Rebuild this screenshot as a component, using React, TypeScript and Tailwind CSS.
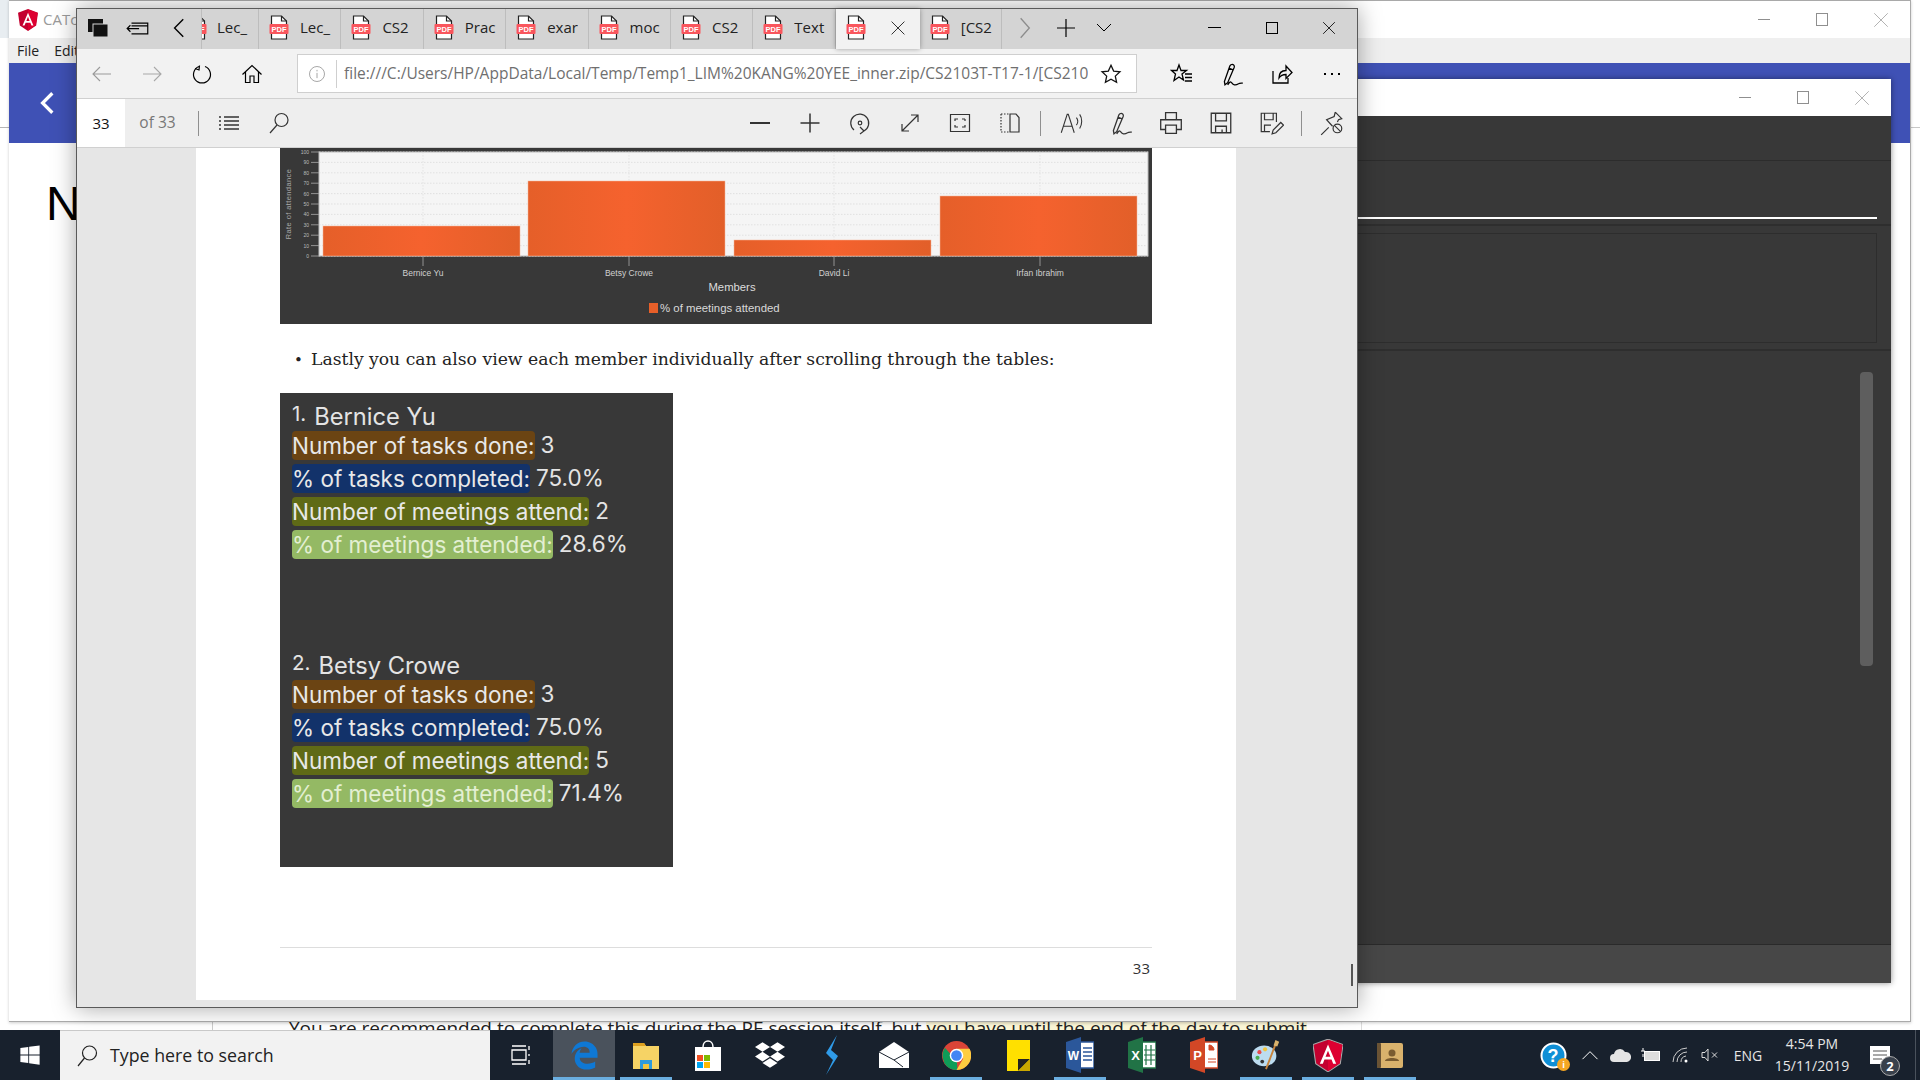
import React from 'react';
import { FaDropbox, FaEdgeLegacy, FaWindows } from 'react-icons/fa6';

const ui = "font-['Open_Sans',sans-serif]";

type IconProps = { children: React.ReactNode; size?: number; width?: number };

const Ico: React.FC<IconProps> = ({ children, size = 24, width = 1.2 }) => (
  <svg width={size} height={size} viewBox="0 0 24 24" fill="none" stroke="currentColor" strokeWidth={width}>
    {children}
  </svg>
);

const Cell: React.FC<{ w: string; children: React.ReactNode }> = ({ w, children }) => (
  <div className={`${w} h-full flex items-center justify-center shrink-0`}>{children}</div>
);

const PdfIcon = () => (
  <svg width="20" height="25" viewBox="0 0 20 25">
    <path d="M2.5 1h10l5 5v18h-15z" fill="#fff" stroke="#222" strokeWidth="1.2" />
    <path d="M12.5 1v5h5" fill="none" stroke="#222" strokeWidth="1.2" />
    <rect x="0.5" y="9" width="19" height="10" rx="1" fill="#f9565d" />
    <text x="10" y="17" textAnchor="middle" fontSize="7.5" fontWeight="700" fill="#fff" fontFamily="Liberation Sans, sans-serif">PDF</text>
  </svg>
);

const Tab: React.FC<{ label: string }> = ({ label }) => (
  <div className="w-[82.4px] h-full shrink-0 flex items-center pl-[10px] pb-[3px] border-r border-[#bdbdbd]">
    <PdfIcon />
    <span className="ml-[11px] w-[31px] overflow-hidden whitespace-nowrap text-[15px] text-[#222]">{label}</span>
  </div>
);

const TabStrip = () => (
  <div className="h-[40px] shrink-0 bg-[#d4d4d4] flex items-center">
    <Cell w="w-[41px] pb-[3px]">
      <svg width="22" height="22" viewBox="0 0 22 22">
        <rect x="1" y="2" width="15" height="13" fill="#111" />
        <rect x="6" y="7" width="15" height="13" fill="#111" stroke="#d4d4d4" strokeWidth="1" />
      </svg>
    </Cell>
    <Cell w="w-[40px] pb-[3px]">
      <Ico size={26} width={1.1}>
        <path d="M6 7.5h15v10H6M6 10h15M2 12.5h11M5 9.5l-3 3 3 3" />
      </Ico>
    </Cell>
    <Cell w="w-[43px] pb-[3px]">
      <Ico size={26} width={1.3}>
        <path d="M15 4l-8 8 8 8" />
      </Ico>
    </Cell>
    <div className="w-[58px] h-full shrink-0 flex items-center pb-[3px] overflow-hidden border-x border-[#bdbdbd]">
      <div className="-ml-[15px] flex">
        <PdfIcon />
      </div>
      <span className="ml-[10px] text-[15px] text-[#222]">Lec_</span>
    </div>
    <Tab label="Lec_" />
    <Tab label="CS2" />
    <Tab label="Prac" />
    <Tab label="exar" />
    <Tab label="moc" />
    <Tab label="CS2" />
    <Tab label="Text" />
    <div className="w-[84px] h-full shrink-0 bg-[#f2f2f2] flex items-center pl-[10px] pb-[3px] shadow-[0_0_5px_rgba(0,0,0,0.35)] z-10">
      <PdfIcon />
      <span className="ml-[21px] flex text-[#222]">
        <Ico size={22} width={1}>
          <path d="M5 5l14 14M19 5L5 19" />
        </Ico>
      </span>
    </div>
    <Tab label="[CS2" />
    <Cell w="w-[45px] pb-[3px]">
      <span className="text-[#8c8c8c] flex">
        <Ico size={26} width={1.2}>
          <path d="M8 3l8 9-8 9" />
        </Ico>
      </span>
    </Cell>
    <Cell w="w-[38px] pb-[3px]">
      <Ico size={24} width={1.2}>
        <path d="M12 3v18M3 12h18" />
      </Ico>
    </Cell>
    <Cell w="w-[37px] pb-[3px]">
      <Ico size={24} width={1}>
        <path d="M5 8l7 7 7-7" />
      </Ico>
    </Cell>
    <div className="flex-1" />
    <Cell w="w-[57px] pb-[3px]">
      <div className="w-[13px] h-px bg-black" />
    </Cell>
    <Cell w="w-[57px] pb-[3px]">
      <div className="w-[12px] h-[12px] border border-black" />
    </Cell>
    <Cell w="w-[57px] pb-[3px]">
      <Ico size={20} width={1}>
        <path d="M5 5l14 14M19 5L5 19" />
      </Ico>
    </Cell>
  </div>
);

const SignIcon = () => (
  <Ico size={26} width={1.2}>
    <path d="M5 19l.5 3 2.5-2 6-14c.8-2-1-3.5-3-2.5-.5.3-.8.7-1 1.2zM9 6.5l3.5 1.500M8 22c2-3.500 3-3 4-1.500s3 2.500 6 .5c1-.7 2-.7 4-.5" />
  </Ico>
);

const AddressBar = () => (
  <div className="h-[50px] shrink-0 bg-[#f2f2f2] flex items-center border-b border-[#d0d0d0]">
    <Cell w="w-[50px]">
      <span className="text-[#9a9a9a] flex">
        <Ico size={24} width={1.1}>
          <path d="M21 12H3M10 5l-7 7 7 7" />
        </Ico>
      </span>
    </Cell>
    <Cell w="w-[50px]">
      <span className="text-[#a8a8a8] flex">
        <Ico size={24} width={1.1}>
          <path d="M3 12h18M14 5l7 7-7 7" />
        </Ico>
      </span>
    </Cell>
    <Cell w="w-[50px]">
      <Ico size={24} width={1.2}>
        <path d="M9 4.5a8.5 8.5 0 1 0 6 0M9.5 3.5L9 8 5 6.500" />
      </Ico>
    </Cell>
    <Cell w="w-[50px]">
      <Ico size={24} width={1.2}>
        <path d="M2.5 12.5L12 3.5l9.5 9M5.5 10v10.5H10V14h4v6.5h4.5V10" />
      </Ico>
    </Cell>
    <div className="ml-[20px] w-[840px] h-[39px] shrink-0 bg-white border border-[#cfcfcf] flex items-center">
      <span className="w-[39px] flex justify-center text-[#8a8a8a] border-r border-[#cfcfcf] h-[28px] items-center">
        <Ico size={18} width={1}>
          <circle cx="12" cy="12" r="10" />
          <path d="M12 10.5v7M12 6.5v2" />
        </Ico>
      </span>
      <span className="ml-[7px] w-[744px] overflow-hidden whitespace-nowrap text-[15.5px] text-[#6f6f6f]">
        file:///C:/Users/HP/AppData/Local/Temp/Temp1_LIM%20KANG%20YEE_inner.zip/CS2103T-T17-1/[CS210
      </span>
      <span className="ml-[12px] flex text-[#111]">
        <Ico size={22} width={1.4}>
          <path d="M12 2.5l2.9 6.3 6.9.8-5.1 4.7 1.400 6.8-6.100-3.400-6.100 3.400 1.400-6.800-5.100-4.700 6.900-.8z" />
        </Ico>
      </span>
    </div>
    <div className="w-[20px] shrink-0" />
    <Cell w="w-[50px]">
      <Ico size={24} width={1.3}>
        <path d="M9 3l2 5.5h5.5L12 12l1.5 6L9 15l-5 3.5L5.5 12 1.5 8.5H7zM15 12h7M15 15.5h7M15 19h7" />
      </Ico>
    </Cell>
    <Cell w="w-[50px]">
      <SignIcon />
    </Cell>
    <Cell w="w-[50px]">
      <Ico size={24} width={1.3}>
        <path d="M3 9v12h15v-5M9 16c0-5 3-7.5 7-7.5V4l6 6.5-6 6v-4c-3 0-5.500 1-7 3.500z" />
      </Ico>
    </Cell>
    <Cell w="w-[50px]">
      <div className="flex gap-[5px]">
        <div className="w-[2px] h-[2px] bg-black" />
        <div className="w-[2px] h-[2px] bg-black" />
        <div className="w-[2px] h-[2px] bg-black" />
      </div>
    </Cell>
  </div>
);

const Sep = () => <div className="w-px h-[25px] bg-[#8f8f8f] shrink-0" />;

const PdfBar = () => (
  <div className="h-[49px] shrink-0 bg-[#eeeeee] flex items-center border-b border-[#d0d0d0] text-[#333]">
    <div className="w-[48px] h-full bg-white flex items-center justify-center text-[15px] text-[#111]">33</div>
    <div className="w-[65px] text-center text-[15.5px] text-[#777]">of 33</div>
    <div className="w-[8px]" />
    <Sep />
    <div className="w-[5px]" />
    <Cell w="w-[50px]">
      <Ico size={24} width={1.3}>
        <path d="M7 6h15M7 10h15M7 14h15M7 18h15M2 6h2M2 10h2M2 14h2M2 18h2" />
      </Ico>
    </Cell>
    <Cell w="w-[50px]">
      <Ico size={24} width={1.2}>
        <circle cx="14.5" cy="9" r="6.5" />
        <path d="M10 14L3 22" />
      </Ico>
    </Cell>
    <div className="flex-1" />
    <Cell w="w-[50px]">
      <div className="w-[20px] h-[2px] bg-[#333]" />
    </Cell>
    <Cell w="w-[50px]">
      <Ico size={24} width={1.5}>
        <path d="M12 2.5v19M2.5 12h19" />
      </Ico>
    </Cell>
    <Cell w="w-[50px]">
      <Ico size={24} width={1.2}>
        <path d="M6 19A9 9 0 1 1 16 20M12 16l4 4-4 3" />
        <circle cx="12" cy="12" r="1.8" />
      </Ico>
    </Cell>
    <Cell w="w-[50px]">
      <Ico size={24} width={1.2}>
        <path d="M4 20L20 4M13 4h7v7M4 13v7h7" />
      </Ico>
    </Cell>
    <Cell w="w-[50px]">
      <Ico size={24} width={1.2}>
        <path d="M2.5 3.5h19v17h-19zM7 10V8h3M17 8h-3M17 8v2M7 14v2h3M17 14v2h-3" />
      </Ico>
    </Cell>
    <Cell w="w-[50px]">
      <Ico size={24} width={1.2}>
        <path d="M3 3h8M3 21h8M3 3v18" strokeDasharray="1.5 1.5" />
        <path d="M12 3h6l3 3.5V21h-9z" />
      </Ico>
    </Cell>
    <div className="w-[5px]" />
    <Sep />
    <div className="w-[5px]" />
    <Cell w="w-[50px]">
      <Ico size={26} width={1}>
        <path d="M3 21L8.5 4h1L15 21M5 15h8M17 7c1.5 2 1.5 5 0 7M20 4c2.5 3.5 2.5 9 0 13" />
      </Ico>
    </Cell>
    <Cell w="w-[50px]">
      <SignIcon />
    </Cell>
    <Cell w="w-[50px]">
      <Ico size={26} width={1.2}>
        <path d="M7 9V2.5h10V9M7 18H2.5V9h19v9H17M7 14h10v7.5H7z" />
      </Ico>
    </Cell>
    <Cell w="w-[50px]">
      <Ico size={26} width={1.2}>
        <path d="M3 3h18v18H3zM7 3v7h10V3M7 21v-6h10v6M13 18v3" />
      </Ico>
    </Cell>
    <Cell w="w-[50px]">
      <Ico size={26} width={1.1}>
        <path d="M11 20H3V3h14v8M6 3v6h8V3M6 20v-6h6M13 22l1-3.5 7-7 2.5 2.5-7 7z" />
      </Ico>
    </Cell>
    <div className="w-[5px]" />
    <Sep />
    <div className="w-[5px]" />
    <Cell w="w-[50px]">
      <Ico size={26} width={1.1}>
        <path d="M2 23l7-7M15 2l6 6-3 1-1 2M15 2l-1 4-7 3 5.5 6" />
        <circle cx="17" cy="17" r="4" />
        <path d="M14 14l6 6" />
      </Ico>
    </Cell>
  </div>
);

const axisTicks = [0, 10, 20, 30, 40, 50, 60, 70, 80, 90, 100];
const bars = [
  { name: 'Bernice Yu', x: 43, top: 78, c: 143 },
  { name: 'Betsy Crowe', x: 248, top: 33, c: 349 },
  { name: 'David Li', x: 454, top: 92, c: 554 },
  { name: 'Irfan Ibrahim', x: 660, top: 48, c: 760 },
];

const AttendanceChart = () => (
  <svg width="872" height="176" viewBox="0 0 872 176" className="block shrink-0 bg-[#383838]">
    <defs>
      <linearGradient id="bar" x1="0" x2="1" y1="0" y2="0">
        <stop offset="0" stopColor="#e55f29" />
        <stop offset="0.5" stopColor="#f5622e" />
        <stop offset="1" stopColor="#e25f29" />
      </linearGradient>
    </defs>
    <rect x="39" y="4" width="829" height="104" fill="#f5f5f5" stroke="#bdbdbd" />
    {axisTicks.map((t) => {
      const y = 108 - t * 1.04;
      return (
        <g key={t}>
          <path d={`M39 ${y}H868`} stroke="#d9d9d9" strokeWidth="0.7" strokeDasharray="1.5 1.5" />
          <path d={`M31 ${y}H39`} stroke="#aaa" strokeWidth="0.8" />
          <text x="29" y={y + 2} textAnchor="end" fontSize="5" fill="#bbb" fontFamily="Liberation Sans, sans-serif">{t}</text>
        </g>
      );
    })}
    <text transform="translate(11 56) rotate(-90)" textAnchor="middle" fontSize="7.5" fill="#aaa" fontFamily="Liberation Sans, sans-serif" letterSpacing="0.4">Rate of attendance</text>
    {bars.map((b) => (
      <g key={b.name}>
        <path d={`M${b.c} 4V108`} stroke="#dedede" strokeWidth="0.7" strokeDasharray="1.5 1.5" />
        <rect x={b.x} y={b.top} width="197" height={108 - b.top} fill="url(#bar)" stroke="#f6b79c" strokeWidth="0.5" />
        <path d={`M${b.c} 108V118`} stroke="#aaa" strokeWidth="0.8" />
        <text x={b.c} y="128" textAnchor="middle" fontSize="8.5" fill="#d0d0d0" fontFamily="Liberation Sans, sans-serif">{b.name}</text>
      </g>
    ))}
    <text x="452" y="143" textAnchor="middle" fontSize="11.3" fill="#dcdcdc" fontFamily="Liberation Sans, sans-serif">Members</text>
    <rect x="369" y="155" width="9" height="10" fill="#e75f29" />
    <text x="380" y="164" fontSize="11.4" fill="#d8d8d8" fontFamily="Liberation Sans, sans-serif">% of meetings attended</text>
  </svg>
);

const Stat: React.FC<{ label: string; value: string; bg: string; tone?: string }> = ({ label, value, bg, tone = 'text-[#e8e8e8]' }) => (
  <div className="flex items-center h-[29px]">
    <span className={`${bg} ${tone} h-full rounded-[4px] flex items-center whitespace-nowrap`}>{label}</span>
    <span className="ml-[6px] -mt-[2px] text-[#e4e4e4] whitespace-nowrap">{value}</span>
  </div>
);

const Member: React.FC<{ n: number; name: string; done: string; pct: string; met: string; metPct: string }> = ({ n, name, done, pct, met, metPct }) => (
  <div className="flex flex-col">
    <div className="h-[31px] pt-[2px] flex items-center text-[#e4e4e4] text-[23.7px]">
      <span className="text-[20.5px] -mt-[5px] mr-[8px]">{n}.</span>
      {name}
    </div>
    <div className="flex flex-col gap-[4px]">
      <Stat label="Number of tasks done:" value={done} bg="bg-[#6b4413]" />
      <Stat label="% of tasks completed:" value={pct} bg="bg-[#12326a]" />
      <Stat label="Number of meetings attend:" value={met} bg="bg-[#5f6a16]" />
      <Stat label="% of meetings attended:" value={metPct} bg="bg-[#94b964]" tone="text-[#e3efd2]" />
    </div>
  </div>
);

const EdgeWindow = () => (
  <div className={`absolute left-[76px] top-[8px] w-[1282px] h-[1000px] flex flex-col border border-[#5a5a5a] shadow-[0_0_22px_rgba(0,0,0,0.35)] ${ui}`}>
    <TabStrip />
    <AddressBar />
    <PdfBar />
    <div className="relative flex-1 bg-[#e6e6e6] overflow-hidden pl-[119px]">
      <div className="w-[1040px] h-[852px] bg-white px-[84px] flex flex-col">
        <AttendanceChart />
        <div className="mt-[25px] h-[22px] flex items-center font-['DejaVu_Serif',serif] text-[17.2px] text-[#222] whitespace-nowrap">
          <span className="w-[31px] pl-[14px] shrink-0 text-[15px]">•</span>
          Lastly you can also view each member individually after scrolling through the tables:
        </div>
        <div className="mt-[22px] w-[393px] h-[474px] shrink-0 bg-[#383838] pt-[7px] pl-[12px] font-['Inter',sans-serif] text-[22.5px] flex flex-col gap-[90px]">
          <Member n={1} name="Bernice Yu" done="3" pct="75.0%" met="2" metPct="28.6%" />
          <Member n={2} name="Betsy Crowe" done="3" pct="75.0%" met="5" metPct="71.4%" />
        </div>
        <div className="mt-[80px] border-t border-[#dddddd] pt-[9px] pr-[2px] text-right text-[15px] text-[#333]">33</div>
      </div>
      <div className="absolute right-[4px] top-[816px] w-[2px] h-[22px] bg-[#555]" />
    </div>
  </div>
);

const WinButtons = () => (
  <div className="flex h-full items-center">
    <Cell w="w-[58.5px]">
      <div className="w-[12px] h-px bg-[#8f8f8f]" />
    </Cell>
    <Cell w="w-[58.5px]">
      <div className="w-[12px] h-[13px] border border-[#8f8f8f]" />
    </Cell>
    <Cell w="w-[58.5px]">
      <span className="flex text-[#9a9a9a]">
        <Ico size={18} width={1}>
          <path d="M3 3l18 18M21 3L3 21" />
        </Ico>
      </span>
    </Cell>
  </div>
);

const AngularLogo: React.FC<{ size: number; ring?: boolean }> = ({ size, ring }) => (
  <svg width={size} height={size * 1.1} viewBox="0 0 22 24">
    <path d="M11 0L0 4l2 14 9 6 9-6 2-14z" fill="#c3002f" stroke={ring ? '#a8a8a8' : 'none'} strokeWidth="0.8" />
    <path d="M11 0.5v23l8.6-5.8 1.9-13.4z" fill="#dd0031" />
    <path d="M11 4L5 18h2.200l1.200-3h5.200l1.200 3H17zM9.200 13L11 8.500 12.800 13z" fill="#fff" />
  </svg>
);

const BackWindow = () => (
  <div className={`absolute left-[9px] top-0 w-[1902px] h-[1022px] bg-white flex flex-col border-b border-[#aaaaaa] border-r shadow-[0_1px_3px_rgba(0,0,0,0.2)] ${ui}`}>
    <div className="h-[38px] shrink-0 bg-white border-t border-[#a9a9a9] flex items-center pl-[9px]">
      <AngularLogo size={20} />
      <span className="ml-[5px] text-[15px] text-[#9a9a9a]">CATcher</span>
      <div className="flex-1" />
      <WinButtons />
    </div>
    <div className="h-[25px] shrink-0 bg-[#efefef] flex items-center pl-[8px] gap-[15px] text-[14px] text-[#222]">
      <span>File</span>
      <span>Edit</span>
    </div>
    <div className="h-[80px] shrink-0 bg-[#3f51b5] flex items-center pl-[26px] text-white">
      <Ico size={26} width={3}>
        <path d="M16 3l-9 9 9 9" />
      </Ico>
    </div>
    <div className="pt-[25px] pl-[37px] text-[48px] leading-[72px] font-['Liberation_Sans',sans-serif] text-black">N</div>
  </div>
);

const ModalWindow = () => (
  <div className="absolute left-[1200px] top-[79px] w-[691px] h-[904px] flex flex-col shadow-[0_0_6px_rgba(0,0,0,0.45)]">
    <div className="h-[37px] shrink-0 bg-white flex justify-end">
      <WinButtons />
    </div>
    <div className="h-[45px] shrink-0 bg-[#383838] border-b border-[#2c2c2c]" />
    <div className="h-[65px] shrink-0 bg-[#383838] border-b-2 border-[#2e2e2e] flex flex-col pr-[14px] pt-[56px]">
      <div className="h-[2px] bg-white" />
    </div>
    <div className="h-[125px] shrink-0 bg-[#383838] border-b-2 border-[#2e2e2e] pt-[7px] pr-[14px]">
      <div className="h-[110px] border border-[#2d2d2d]" />
    </div>
    <div className="flex-1 bg-[#383838] border-b border-[#2a2a2a] flex justify-end pt-[21px] pr-[18px]">
      <div className="w-[13px] h-[294px] rounded-[4px] bg-[#5e5e5e]" />
    </div>
    <div className="h-[38px] shrink-0 bg-[#474747]" />
  </div>
);

const tasks: { icon: React.ReactNode; mark?: 'full' | 'line'; active?: boolean }[] = [
  { icon: <FaEdgeLegacy size={29} color="#0f78d4" />, mark: 'full', active: true },
  {
    icon: (
      <svg width="28" height="32" viewBox="0 0 28 32">
        <path d="M1 4h11l2 3h13v23H1z" fill="#f6d365" />
        <path d="M1 4h11l2 3H1z" fill="#dda01f" />
        <path d="M8 30v-9h12v9h-3v-5h-6v5z" fill="#2f9bdc" />
        <rect x="11" y="25" width="6" height="5" fill="#f3c53f" />
      </svg>
    ),
    mark: 'line',
  },
  {
    icon: (
      <svg width="28" height="32" viewBox="0 0 28 32">
        <path d="M9 8c0-8 10-8 10 0" fill="none" stroke="#fff" strokeWidth="1.5" />
        <rect x="1" y="8" width="26" height="24" fill="#fff" />
        <rect x="3" y="16" width="6" height="6" fill="#f25022" />
        <rect x="10" y="16" width="6" height="6" fill="#7fba00" />
        <rect x="3" y="23" width="6" height="6" fill="#00a4ef" />
        <rect x="10" y="23" width="6" height="6" fill="#ffb900" />
      </svg>
    ),
  },
  { icon: <FaDropbox size={30} color="#fff" /> },
  {
    icon: (
      <svg width="18" height="40" viewBox="0 0 18 40">
        <path d="M14 0L3 18l7 7-7 15 12-19-7-6z" fill="#2f9be8" />
      </svg>
    ),
  },
  {
    icon: (
      <svg width="30" height="26" viewBox="0 0 30 26">
        <path d="M0 10L15 0l15 10v16H0z" fill="#fff" />
        <path d="M0 10l15 8 15-8M15 18l9 7" fill="none" stroke="#18212d" strokeWidth="1" />
      </svg>
    ),
  },
  {
    icon: (
      <svg width="29" height="37" viewBox="0 0 30 30">
        <circle cx="15" cy="15" r="15" fill="#db4437" />
        <path d="M15 15L2 22a15 15 0 0 0 14 8z" fill="#0f9d58" />
        <path d="M3 7a15 15 0 0 0 0 16l9-6z" fill="#0f9d58" />
        <path d="M15 8h13.5A15 15 0 0 1 15 30l7-12z" fill="#ffcd40" />
        <circle cx="15" cy="15" r="7" fill="#fff" />
        <circle cx="15" cy="15" r="5.5" fill="#4285f4" />
      </svg>
    ),
    mark: 'line',
  },
  {
    icon: (
      <svg width="23" height="31" viewBox="0 0 23 31">
        <rect width="23" height="31" fill="#ffe000" />
        <path d="M11 31V19h12z" fill="#222" />
        <path d="M11 31l12-12v12z" fill="#caa800" />
      </svg>
    ),
  },
  {
    icon: (
      <svg width="28" height="36" viewBox="0 0 28 36">
        <rect x="9" y="5" width="19" height="26" fill="#fff" stroke="#2b579a" strokeWidth="1.5" />
        <path d="M17 11h9M17 15h9M17 19h9M17 23h9" stroke="#2b579a" strokeWidth="1.5" />
        <path d="M0 5l15-5v36L0 31z" fill="#2b579a" />
        <text x="7.5" y="23" textAnchor="middle" fontSize="12" fontWeight="700" fill="#fff" fontFamily="Liberation Sans, sans-serif">W</text>
      </svg>
    ),
    mark: 'line',
  },
  {
    icon: (
      <svg width="28" height="36" viewBox="0 0 28 36">
        <rect x="9" y="5" width="19" height="26" fill="#fff" stroke="#217346" strokeWidth="1.5" />
        <path d="M18 8v20M23 8v20M16 13h11M16 18h11M16 23h11" stroke="#217346" strokeWidth="1.2" />
        <path d="M0 5l15-5v36L0 31z" fill="#217346" />
        <text x="7.5" y="23" textAnchor="middle" fontSize="13" fontWeight="700" fill="#fff" fontFamily="Liberation Sans, sans-serif">X</text>
      </svg>
    ),
  },
  {
    icon: (
      <svg width="28" height="36" viewBox="0 0 28 36">
        <rect x="9" y="5" width="19" height="26" fill="#fff" stroke="#d24726" strokeWidth="1.5" />
        <path d="M19 8a5 5 0 0 1 5 5h-5zM18 22h8M18 25h8" stroke="#d24726" fill="#d24726" strokeWidth="1" />
        <path d="M0 5l15-5v36L0 31z" fill="#d24726" />
        <text x="7.5" y="23" textAnchor="middle" fontSize="13" fontWeight="700" fill="#fff" fontFamily="Liberation Sans, sans-serif">P</text>
      </svg>
    ),
  },
  {
    icon: (
      <svg width="30" height="32" viewBox="0 0 30 34">
        <ellipse cx="13" cy="18" rx="13" ry="11" fill="#bcdcf0" />
        <circle cx="8" cy="14" r="2.2" fill="#e84a4a" />
        <circle cx="14" cy="11" r="2.2" fill="#f3c53f" />
        <circle cx="6" cy="20" r="2.2" fill="#4caf50" />
        <circle cx="11" cy="24" r="2" fill="#333" />
        <path d="M15 32L25 6" stroke="#c8843c" strokeWidth="2" />
        <path d="M23 7l2-6 4 2-2 5z" fill="#d9b26c" />
      </svg>
    ),
    mark: 'line',
  },
  { icon: <AngularLogo size={30} ring />, mark: 'line' },
  {
    icon: (
      <svg width="26" height="25" viewBox="0 0 26 25">
        <rect width="26" height="25" rx="2" fill="#d9b26c" />
        <rect width="4" height="25" rx="1" fill="#6a5334" />
        <circle cx="15" cy="10" r="3.5" fill="#7a5c30" />
        <path d="M8 18c0-4 14-4 14 0z" fill="#7a5c30" />
      </svg>
    ),
    mark: 'line',
  },
];

const Taskbar = () => (
  <div className={`h-[50px] shrink-0 bg-[#18212d] flex items-center z-10 ${ui}`}>
    <Cell w="w-[60px]">
      <FaWindows size={22} color="#fff" />
    </Cell>
    <div className="w-[430px] h-full shrink-0 bg-[#f2f2f2] border-t border-[#c9c9c9] flex items-center pl-[15px] text-[#222]">
      <Ico size={24} width={1.2}>
        <circle cx="14.5" cy="9" r="7" />
        <path d="M9.5 14L3 22" />
      </Ico>
      <span className="ml-[11px] text-[17.8px]">Type here to search</span>
    </div>
    <Cell w="w-[63px] pr-[4px]">
      <span className="text-white flex">
        <Ico size={24} width={1.3}>
          <path d="M4 7h14v10H4zM4 3h14M4 21h14M21 3v4M21 11v2M21 17v4" />
        </Ico>
      </span>
    </Cell>
    {tasks.map((t, i) => (
      <div key={i} className={`relative w-[62px] h-full shrink-0 flex items-center justify-center ${t.active ? 'bg-[#4a525c]' : ''}`}>
        {t.icon}
        {t.mark === 'full' && <div className="absolute bottom-0 left-0 right-0 h-[3px] bg-[#6aaee0]" />}
        {t.mark === 'line' && <div className="absolute bottom-0 left-[5px] right-[5px] h-[3px] bg-[#6aaee0]" />}
      </div>
    ))}
    <div className="flex-1" />
    <Cell w="w-[35px]">
      <div className="relative flex">
        <svg width="27" height="27" viewBox="0 0 27 27">
          <circle cx="13.5" cy="13.5" r="12" fill="#0f8fd6" stroke="#fff" strokeWidth="2" />
          <text x="13" y="20" textAnchor="middle" fontSize="18" fontWeight="700" fill="#fff" fontFamily="Liberation Sans, sans-serif">?</text>
        </svg>
        <span className="absolute -right-[3px] -bottom-[2px] w-[13px] h-[13px] rounded-full bg-[#f5a623] text-white text-[9px] leading-[13px] text-center font-bold">i</span>
      </div>
    </Cell>
    <div className="w-[4px]" />
    <Cell w="w-[30px]">
      <span className="text-white flex">
        <Ico size={20} width={1.2}>
          <path d="M3 17l9-9 9 9" />
        </Ico>
      </span>
    </Cell>
    <Cell w="w-[30px]">
      <svg width="21" height="13" viewBox="0 0 21 13">
        <path d="M4 13a4 4 0 0 1 0-8 6 6 0 0 1 11-2 5 5 0 0 1 2 10z" fill="#e4e4e4" />
      </svg>
    </Cell>
    <Cell w="w-[30px]">
      <svg width="21" height="14" viewBox="0 0 21 14" fill="none" stroke="#fff">
        <rect x="4.5" y="3.5" width="15" height="9" fill="#ddd" />
        <path d="M3 0v3M1 3h4M3 6v3" />
      </svg>
    </Cell>
    <Cell w="w-[30px]">
      <svg width="17" height="16" viewBox="0 0 17 16" fill="none" stroke="#ccc">
        <path d="M1 15A14 14 0 0 1 15 1M5 15A10 10 0 0 1 15 5M9 15a6 6 0 0 1 5-6" />
        <circle cx="14" cy="14" r="1.5" fill="#fff" stroke="none" />
      </svg>
    </Cell>
    <Cell w="w-[30px]">
      <svg width="19" height="14" viewBox="0 0 19 14" fill="none" stroke="#ddd">
        <path d="M1 4.5h3L7 1v12L4 9.5H1zM11 4.5l5 5M16 4.5l-5 5" />
      </svg>
    </Cell>
    <div className="w-[46px] text-center text-[14px] text-[#e6e6e6]">ENG</div>
    <div className="w-[82px] flex flex-col items-center text-[14px] leading-[22px] text-[#e6e6e6]">
      <span>4:54 PM</span>
      <span>15/11/2019</span>
    </div>
    <Cell w="w-[54px]">
      <div className="relative flex">
        <svg width="20" height="18" viewBox="0 0 20 18">
          <rect width="20" height="18" fill="#fff" />
          <path d="M3 5h14M3 9h14M3 13h9" stroke="#555" strokeWidth="1" />
        </svg>
        <span className="absolute -right-[10px] -bottom-[12px] w-[20px] h-[20px] rounded-full bg-[#39414c] border border-[#aaa] text-white text-[13px] leading-[18px] text-center font-bold">2</span>
      </div>
    </Cell>
    <div className="w-[13px] h-full flex justify-end pr-[4px]">
      <div className="w-px h-full bg-[#4a525c]" />
    </div>
  </div>
);

export default function App() {
  return (
    <div className="w-[1920px] h-[1080px] overflow-hidden flex flex-col bg-white">
      <div className="relative flex-1">
        <div className="absolute left-0 top-0 w-[9px] h-[38px] bg-[#e8edf1]" />
        <div className="absolute left-0 top-[127px] w-[9px] h-px bg-[#b5b5b5]" />
        <div className="absolute right-0 top-[127px] w-[9px] h-px bg-[#c8c8c8]" />
        <div className="absolute left-[212px] top-[1022px] w-px h-[8px] bg-[#cccccc]" />
        <div className="absolute left-[1361px] top-[1022px] w-px h-[8px] bg-[#dddddd]" />
        <div className="absolute left-[289px] top-[1015px] whitespace-nowrap font-['Open_Sans',sans-serif] text-[19px] leading-[26px] text-[#222]">
          You are recommended to complete this during the PE session itself, but <span className="bg-[#fdf8d8]">you have until the end of the day to submit</span>
        </div>
        <BackWindow />
        <ModalWindow />
        <EdgeWindow />
      </div>
      <Taskbar />
    </div>
  );
}
